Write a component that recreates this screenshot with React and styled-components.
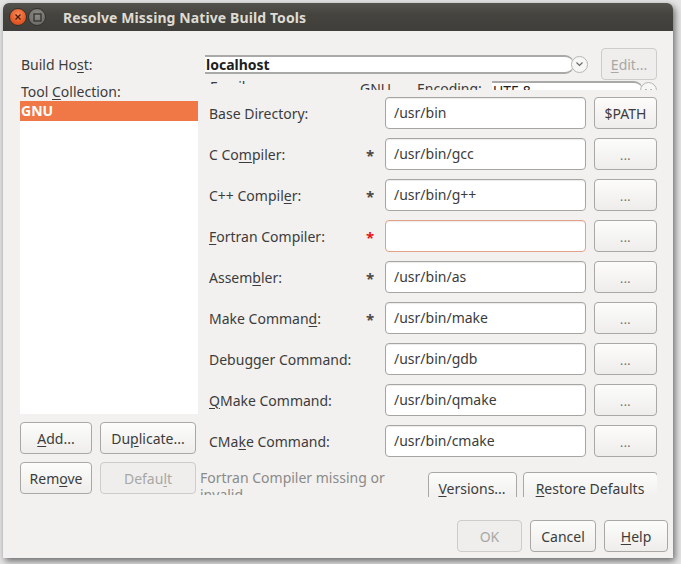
import React from 'react';
import styled, { createGlobalStyle } from 'styled-components';

const Global = createGlobalStyle`
  html, body { margin: 0; padding: 0; background: #e6e5e6; }
  body { width: 681px; height: 564px; overflow: hidden; font-family: "Noto Sans", "DejaVu Sans", sans-serif; }
  #root { padding: 3px 0 0 3px; }
  * { box-sizing: border-box; }
`;

const FONT = `"Noto Sans", "DejaVu Sans", sans-serif`;

const Window = styled.div`
  width: 670px;
  height: 555px;
  background: #f2f1f0;
  border-radius: 6px 6px 0 0;
  overflow: hidden;
  box-shadow: 2px 3px 7px rgba(0,0,0,0.55);
  display: flex;
  flex-direction: column;
`;

const TitleBar = styled.div`
  height: 28px;
  flex: none;
  background: linear-gradient(#55534d, #45443f 40%, #3f3e3a);
  display: flex;
  align-items: center;
  padding-left: 6px;
`;

const WinBtn = styled.div`
  width: 18px;
  height: 18px;
  border-radius: 50%;
  border: 1px solid #33322e;
  margin-right: 1px;
  display: flex;
  align-items: center;
  justify-content: center;
  background: ${p => p.$close
    ? 'radial-gradient(circle at 50% 35%, #f98b5a, #e25a26 60%, #c9441a)'
    : 'radial-gradient(circle at 50% 35%, #8e8c86, #716f6a 70%, #5e5c57)'};
`;

const Title = styled.div`
  margin-left: 16px;
  color: #dfdbd2;
  font: bold 14px ${FONT};
  letter-spacing: 0.1px;
`;

const Body = styled.div`
  flex: 1;
  display: flex;
  flex-direction: column;
  padding: 17px 16px 6px 17px;
  color: #3c3c3c;
  font: 14px ${FONT};
`;

const TopRow = styled.div`
  height: 32px;
  display: grid;
  grid-template-columns: 185px 383px 1fr;
  align-items: center;
`;

const Label = styled.div`
  padding-left: ${p => p.$pad || 0}px;
  white-space: nowrap;
  color: #3c3c3c;
`;

const U = styled.span`
  text-decoration: underline;
  text-underline-offset: 2px;
  text-decoration-thickness: 1px;
`;

const Combo = styled.div`
  display: flex;
  align-items: center;
  height: 19px;
`;

const ComboField = styled.div`
  flex: 1;
  height: 19px;
  background: #fff;
  border-top: 2px solid #a9a9a7;
  border-bottom: 2px solid #a9a9a7;
  border-right: 1px solid #bdbdba;
  border-radius: 0 9px 9px 0;
  font-size: 14px;
  font-weight: ${p => p.$bold ? 'bold' : 'normal'};
  color: #1e1e1e;
  line-height: 15px;
  padding-left: 1px;
  white-space: nowrap;
  overflow: hidden;
`;

const ComboArrow = styled.div`
  width: 17px;
  height: 17px;
  margin-left: -3px;
  border-radius: 50%;
  border: 1px solid #b6b5b1;
  background: #f7f7f6;
  display: flex;
  align-items: center;
  justify-content: center;
`;

const Button = styled.button`
  height: 32px;
  padding: 0 8px;
  border: 1px solid ${p => p.disabled ? '#cdccc8' : '#a9a8a4'};
  border-radius: 4px;
  background: ${p => p.disabled ? '#efeeec' : 'linear-gradient(#fcfcfb, #eeedeb)'};
  color: ${p => p.disabled ? '#a8a8a5' : '#3c3c3c'};
  font: 14px ${FONT};
  white-space: nowrap;
  width: ${p => p.$w ? p.$w + 'px' : 'auto'};
  flex: none;
`;

const EditButton = styled(Button)`
  justify-self: end;
  width: 56px;
`;

const Main = styled.div`
  display: grid;
  grid-template-columns: 178px 452px;
  column-gap: 7px;
`;

const LeftCol = styled.div`
  display: flex;
  flex-direction: column;
`;

const ListLabel = styled.div`
  height: 21px;
  padding: 2px 0 0 1px;
  white-space: nowrap;
`;

const List = styled.div`
  height: 313px;
  background: #fff;
`;

const ListItem = styled.div`
  height: 20px;
  background: ${p => p.$selected ? '#f07746' : 'transparent'};
  color: ${p => p.$selected ? '#fff' : '#3c3c3c'};
  font-weight: bold;
  padding-left: 1px;
  line-height: 20px;
`;

const BtnPair = styled.div`
  display: grid;
  grid-template-columns: 72px 96px;
  column-gap: 8px;
  margin-top: 8px;
`;

const RightCol = styled.div`
  display: flex;
  flex-direction: column;
`;

const ClipRow = styled.div`
  height: 9px;
  overflow: hidden;
  display: flex;
  align-items: flex-start;
  margin-bottom: 7px;
  margin-top: 1px;
`;

const ClipItem = styled.div`
  width: ${p => p.$w ? p.$w + 'px' : 'auto'};
  flex: ${p => p.$w ? 'none' : '1'};
  height: ${p => p.$h}px;
  overflow: hidden;
  padding-left: ${p => p.$pad || 0}px;
  line-height: 17px;
  white-space: nowrap;
  color: #3c3c3c;
  & > span { display: block; margin-top: ${p => p.$off}px; }
`;

const Rows = styled.div`
  display: grid;
  grid-template-columns: 150px 14px 201px 63px;
  column-gap: 8px;
  row-gap: 9px;
  grid-auto-rows: 32px;
  align-items: center;
`;

const Star = styled.div`
  text-align: center;
  color: ${p => p.$error ? '#e8161a' : '#4a4a4a'};
  font-weight: bold;
  font-size: 15px;
  padding-top: 2px;
`;

const Input = styled.div`
  height: 32px;
  border: 1px solid ${p => p.$error ? '#e4a189' : '#a6a5a1'};
  border-radius: 4px;
  background: #fff;
  box-shadow: inset 0 1px 1px rgba(0,0,0,0.08);
  padding-left: 8px;
  line-height: 30px;
  white-space: nowrap;
  overflow: hidden;
  color: #3c3c3c;
`;

const Dots = styled.span`
  color: #6e6e6e;
  font-size: 12px;
  letter-spacing: 0.5px;
`;

const StatusRow = styled.div`
  display: flex;
  margin-left: -5px;
  margin-top: 12px;
`;

const Message = styled.div`
  width: 228px;
  height: 26px;
  overflow: hidden;
  line-height: 17px;
  color: #8b8b88;
`;

const ClipButtons = styled.div`
  display: flex;
  gap: 6px;
  height: 25px;
  overflow: hidden;
  margin-top: 3px;
`;

const DialogRow = styled.div`
  display: flex;
  justify-content: flex-end;
  gap: 8px;
  margin-top: auto;
  margin-right: -11px;
`;

function Mn({ text, m }) {
  if (m == null) return text;
  return (
    <>
      {text.slice(0, m)}<U>{text[m]}</U>{text.slice(m + 1)}
    </>
  );
}

const rows = [
  { label: 'Base Directory:', value: '/usr/bin', btn: '$PATH' },
  { label: 'C Compiler:', m: 4, star: true, value: '/usr/bin/gcc' },
  { label: 'C++ Compiler:', m: 10, star: true, value: '/usr/bin/g++' },
  { label: 'Fortran Compiler:', m: 0, star: true, error: true, value: '' },
  { label: 'Assembler:', m: 5, star: true, value: '/usr/bin/as' },
  { label: 'Make Command:', m: 11, star: true, value: '/usr/bin/make' },
  { label: 'Debugger Command:', value: '/usr/bin/gdb' },
  { label: 'QMake Command:', m: 0, value: '/usr/bin/qmake' },
  { label: 'CMake Command:', m: 3, value: '/usr/bin/cmake' },
];

const Chevron = () => (
  <svg width="9" height="6" viewBox="0 0 9 6">
    <path d="M1.5 1.5 L4.5 4.5 L7.5 1.5" fill="none" stroke="#6a6a67" strokeWidth="1.2" />
  </svg>
);

export default function App() {
  return (
    <>
      <Global />
      <Window>
        <TitleBar>
          <WinBtn $close>
            <svg width="8" height="8" viewBox="0 0 8 8">
              <path d="M1.5 1.5 L6.5 6.5 M6.5 1.5 L1.5 6.5" stroke="#4a1c0c" strokeWidth="1.3" />
            </svg>
          </WinBtn>
          <WinBtn>
            <svg width="9" height="9" viewBox="0 0 9 9">
              <rect x="1" y="1" width="7" height="7" fill="none" stroke="#33322e" strokeWidth="1.3" />
            </svg>
          </WinBtn>
          <Title>Resolve Missing Native Build Tools</Title>
        </TitleBar>
        <Body>
          <TopRow>
            <Label $pad={1}><Mn text="Build Host:" m={8} /></Label>
            <Combo>
              <ComboField $bold>localhost</ComboField>
              <ComboArrow><Chevron /></ComboArrow>
            </Combo>
            <EditButton disabled><Mn text="Edit..." m={0} /></EditButton>
          </TopRow>
          <Main>
            <LeftCol>
              <ListLabel><Mn text="Tool Collection:" m={5} /></ListLabel>
              <List>
                <ListItem $selected>GNU</ListItem>
              </List>
              <BtnPair>
                <Button><Mn text="Add..." m={0} /></Button>
                <Button><Mn text="Duplicate..." m={2} /></Button>
              </BtnPair>
              <BtnPair>
                <Button><Mn text="Remove" m={3} /></Button>
                <Button disabled><Mn text="Default" m={5} /></Button>
              </BtnPair>
            </LeftCol>
            <RightCol>
              <ClipRow>
                <ClipItem $w={155} $pad={5} $h={3} $off={-3}><span>Family:</span></ClipItem>
                <ClipItem $w={57} $h={9} $off={-1}><span>GNU</span></ClipItem>
                <ClipItem $w={75} $h={9} $off={-1}><span>Encoding:</span></ClipItem>
                <ClipItem $h={9} $off={0}>
                  <Combo>
                    <ComboField>UTF-8</ComboField>
                    <ComboArrow><Chevron /></ComboArrow>
                  </Combo>
                </ClipItem>
              </ClipRow>
              <Rows>
                {rows.map((r, i) => (
                  <React.Fragment key={i}>
                    <Label $pad={4}><Mn text={r.label} m={r.m} /></Label>
                    <Star $error={r.error}>{r.star ? '*' : ''}</Star>
                    <Input $error={r.error}>{r.value}</Input>
                    <Button>{r.btn ? r.btn : <Dots>...</Dots>}</Button>
                  </React.Fragment>
                ))}
              </Rows>
              <StatusRow>
                <Message>Fortran Compiler missing or<br />invalid</Message>
                <ClipButtons>
                  <Button $w={89}><Mn text="Versions..." m={0} /></Button>
                  <Button $w={135}><Mn text="Restore Defaults" m={0} /></Button>
                </ClipButtons>
              </StatusRow>
            </RightCol>
          </Main>
          <DialogRow>
            <Button disabled $w={65}>OK</Button>
            <Button $w={66}>Cancel</Button>
            <Button $w={64}><Mn text="Help" m={0} /></Button>
          </DialogRow>
        </Body>
      </Window>
    </>
  );
}
